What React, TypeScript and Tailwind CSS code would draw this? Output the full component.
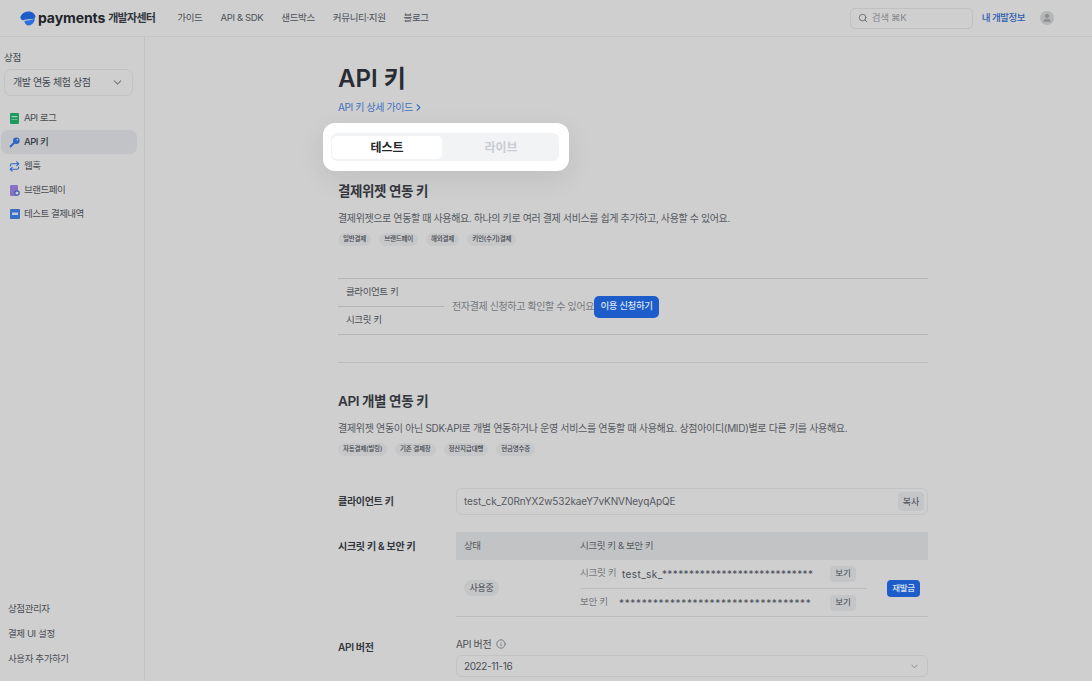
import { ChevronDown, ChevronRight, Info, Repeat, Search, User } from "lucide-react";

const font = "font-['Inter','Noto_Sans_CJK_KR',sans-serif]";

function Chip({ children }: { children: string }) {
  return (
    <span className="flex h-[13px] items-center rounded-full bg-[#c6c7c9] px-[5px] text-[6.500px] font-medium leading-none tracking-[-0.2px] text-[#3f444b]">
      {children}
    </span>
  );
}

function LogoMark() {
  return (
    <svg width="16" height="15" viewBox="0 0 15 14">
      <path d="M7 0.5C10 0 14.500 2 14.500 5.500C13 8.500 9 7 5.500 8C3 8.500 2.500 9 2 8.500C0 7.500 0 5.500 1.200 4C2.500 2 4.500 1 7 0.500Z" fill="#1d5cc9" />
      <path d="M4 9.500C7 8.500 11 9 14 6.500C14 10 11.500 13.500 8 13.500C6 13.500 4.500 11.500 4 9.500Z" fill="#2a6fdc" />
    </svg>
  );
}

function LogIcon() {
  return (
    <svg width="9" height="11" viewBox="0 0 9 11">
      <rect width="9" height="11" rx="1.200" fill="#1f9a5e" />
      <rect x="1.500" y="3" width="6" height="1.200" fill="#9fd6ba" />
      <rect x="1.500" y="6" width="6" height="1" fill="#6cbd95" />
    </svg>
  );
}

function KeyIcon() {
  return (
    <svg width="11" height="11" viewBox="0 0 11 11">
      <circle cx="7.300" cy="3.700" r="3.300" fill="#2f67c4" />
      <path d="M5.500 5.500L1 10" stroke="#2f67c4" strokeWidth="2" />
      <circle cx="8.300" cy="2.700" r="0.800" fill="#cfcfcf" />
    </svg>
  );
}

function BrandIcon() {
  return (
    <svg width="10" height="11" viewBox="0 0 10 11">
      <rect width="8" height="11" rx="1.200" fill="#8a70c4" />
      <circle cx="7" cy="8" r="2.200" fill="#cfcfcf" stroke="#3a5fb0" strokeWidth="1.200" />
    </svg>
  );
}

function ReceiptIcon() {
  return (
    <svg width="10" height="10" viewBox="0 0 10 10">
      <rect width="10" height="10" rx="1" fill="#3a6ec4" />
      <rect x="2" y="3.500" width="6" height="2.500" fill="#bcc8dc" />
    </svg>
  );
}

function NavItem({ icon, label, active }: { icon: React.ReactNode; label: string; active?: boolean }) {
  return (
    <div className={`ml-[1px] flex h-[24px] w-[136px] items-center gap-[4px] rounded-[7px] pl-[8px] text-[9.500px] tracking-[-0.5px] ${active ? "bg-[#c2c3c6] font-medium text-[#33383f]" : "text-[#4a4e55]"}`}>
      <span className="flex w-[11px] justify-center">{icon}</span>
      {label}
    </div>
  );
}

function Header() {
  return (
    <header className="flex h-[37px] shrink-0 items-center border-b border-[#c5c5c5] pl-[20px] pr-[38px]">
      <LogoMark />
      <span className="ml-[2px] text-[14px] font-bold leading-none tracking-[-0.1px] text-[#22262c]">payments</span>
      <span className="ml-[3px] text-[11px] font-semibold tracking-[-0.7px] text-[#33373d]">개발자센터</span>
      <nav className="ml-[22px] flex items-center gap-[18px] text-[9.500px] tracking-[-0.35px] text-[#4b5057]">
        <span>가이드</span>
        <span>API &amp; SDK</span>
        <span>샌드박스</span>
        <span>커뮤니티·지원</span>
        <span>블로그</span>
      </nav>
      <div className="ml-auto flex h-[21px] w-[123px] items-center gap-[4px] rounded-[5px] border border-[#bfc0c2] pl-[7px] text-[9.500px] tracking-[-0.3px] text-[#85888d]">
        <Search size={10} strokeWidth={2} className="text-[#5f6368]" />
        검색 ⌘K
      </div>
      <span className="ml-[9px] text-[9.500px] font-medium tracking-[-0.5px] text-[#2c5cae]">내 개발정보</span>
      <span className="ml-[15px] flex h-[14px] w-[14px] items-center justify-center overflow-hidden rounded-full bg-[#b4b5b7]">
        <User size={10} fill="#8d8e90" stroke="#8d8e90" />
      </span>
    </header>
  );
}

function Sidebar() {
  return (
    <aside className="flex w-[145px] shrink-0 flex-col border-r border-[#c3c3c3] pb-[15px] pt-[14px]">
      <div className="pl-[4px] text-[9.500px] tracking-[-0.3px] text-[#43474e]">상점</div>
      <div className="mx-[4px] mt-[4px] flex h-[27px] w-[129px] items-center justify-between rounded-[7px] border border-[#c1c2c4] pl-[8px] pr-[8px] text-[10px] tracking-[-0.4px] text-[#43474e]">
        개발 연동 체험 상점
        <ChevronDown size={13} className="text-[#74777c]" />
      </div>
      <div className="mt-[10px] flex flex-col">
        <NavItem label="API 로그" icon={<LogIcon />} />
        <NavItem label="API 키" active icon={<KeyIcon />} />
        <NavItem label="웹훅" icon={<Repeat size={11} strokeWidth={2.500} className="text-[#2f67c4]" />} />
        <NavItem label="브랜드페이" icon={<BrandIcon />} />
        <NavItem label="테스트 결제내역" icon={<ReceiptIcon />} />
      </div>
      <div className="mt-auto flex flex-col gap-[10px] pl-[8px] text-[9.500px] leading-[15px] tracking-[-0.4px] text-[#4a4e55]">
        <span>상점관리자</span>
        <span>결제 UI 설정</span>
        <span>사용자 추가하기</span>
      </div>
    </aside>
  );
}

function SecretRow({ label, value, labelWidth, spacing }: { label: string; value: string; labelWidth: string; spacing: string }) {
  return (
    <div className="flex h-[28px] items-center pr-[11px]">
      <span className={`shrink-0 text-[9.500px] tracking-[-0.3px] text-[#75787d] ${labelWidth}`}>{label}</span>
      <span className={`whitespace-nowrap pt-[1px] text-[10px] text-[#4a4e55] ${spacing}`}>{value}</span>
      <span className="ml-auto flex h-[16px] w-[26px] items-center justify-center rounded-[4px] bg-[#c4c5c7] text-[8.500px] text-[#43474e]">보기</span>
    </div>
  );
}

function Main() {
  return (
    <main className="min-w-0 flex-1 pl-[193px] pr-[164px] pt-[28px]">
      <h1 className="text-[24px] font-semibold leading-[28px] text-[#282c33]">API 키</h1>
      <a className="mt-[7px] flex items-center text-[10px] leading-[14px] tracking-[-0.4px] text-[#3e6fc0]">
        API 키 상세 가이드
        <ChevronRight size={11} strokeWidth={2.500} />
      </a>
      <div className="-ml-[15px] mt-[9px] h-[48px] w-[246px] rounded-[12px] bg-white py-[10px] pl-[8px] pr-[10px] shadow-[0_8px_28px_rgba(0,0,0,0.08)]">
        <div className="flex h-[28px] items-center rounded-[6px] bg-[#f2f3f5] px-[1px]">
          <div className="flex h-[23px] w-[110px] items-center justify-center rounded-[5px] bg-white pt-[1px] text-[12px] font-bold text-[#24272c]">테스트</div>
          <div className="flex flex-1 items-center justify-center pl-[2px] pt-[1px] text-[12px] font-semibold text-[#c9ccd1]">라이브</div>
        </div>
      </div>

      <h2 className="mt-[10px] text-[13.500px] font-semibold leading-[20px] tracking-[-0.4px] text-[#33373d]">결제위젯 연동 키</h2>
      <p className="mt-[9px] whitespace-nowrap text-[10px] leading-[16px] tracking-[-0.38px] text-[#55595f]">
        결제위젯으로 연동할 때 사용해요. 하나의 키로 여러 결제 서비스를 쉽게 추가하고, 사용할 수 있어요.
      </p>
      <div className="mt-[7px] flex gap-[8px]">
        <Chip>일반결제</Chip>
        <Chip>브랜드페이</Chip>
        <Chip>해외결제</Chip>
        <Chip>키인(수기)결제</Chip>
      </div>

      <div className="mt-[32px] flex h-[57px] items-center border-y border-[#b4b5b7]">
        <div className="flex w-[106px] flex-col text-[9.500px] tracking-[-0.4px] text-[#4a4e55]">
          <span className="flex h-[28px] items-center border-b border-[#b4b5b7] pl-[8px]">클라이언트 키</span>
          <span className="flex h-[27px] items-center pl-[8px]">시크릿 키</span>
        </div>
        <span className="ml-[8px] text-[10px] tracking-[-0.38px] text-[#75787d]">전자결제 신청하고 확인할 수 있어요</span>
        <span className="flex h-[22px] w-[65px] items-center justify-center rounded-[5px] bg-[#1d5cc9] text-[9.500px] font-medium tracking-[-0.4px] text-[#d9e2f2]">이용 신청하기</span>
      </div>
      <div className="mt-[27px] h-px bg-[#bdbec0]" />

      <h2 className="mt-[28px] text-[13.500px] font-semibold leading-[20px] tracking-[-0.4px] text-[#33373d]">API 개별 연동 키</h2>
      <p className="mt-[9px] whitespace-nowrap text-[10px] leading-[16px] tracking-[-0.32px] text-[#55595f]">
        결제위젯 연동이 아닌 SDK·API로 개별 연동하거나 운영 서비스를 연동할 때 사용해요. 상점아이디(MID)별로 다른 키를 사용해요.
      </p>
      <div className="mt-[7px] flex gap-[8px]">
        <Chip>자동결제(빌링)</Chip>
        <Chip>기존 결제창</Chip>
        <Chip>정산지급대행</Chip>
        <Chip>현금영수증</Chip>
      </div>

      <div className="mt-[32px] flex items-center">
        <span className="w-[118px] text-[10px] font-semibold tracking-[-0.3px] text-[#33373d]">클라이언트 키</span>
        <div className="flex h-[27px] flex-1 items-center justify-between rounded-[6px] border border-[#c2c3c5] pl-[7px] pr-[3px] text-[10px] tracking-[-0.1px] text-[#55595f]">
          test_ck_Z0RnYX2w532kaeY7vKNVNeyqApQE
          <span className="flex h-[19px] w-[26px] items-center justify-center rounded-[4px] bg-[#c4c5c7] text-[9px] text-[#43474e]">복사</span>
        </div>
      </div>

      <div className="mt-[17px] flex">
        <span className="w-[118px] pt-[6px] text-[10px] font-semibold leading-[16px] tracking-[-0.3px] text-[#33373d]">시크릿 키 &amp; 보안 키</span>
        <div className="flex-1">
          <div className="flex h-[28px] items-center bg-[#c2c3c5] text-[9.500px] tracking-[-0.4px] text-[#55595f]">
            <span className="w-[124px] pl-[8px]">상태</span>
            <span>시크릿 키 &amp; 보안 키</span>
          </div>
          <div className="flex h-[57px] items-center border-b border-[#bcbdbf]">
            <div className="w-[124px] pl-[8px]">
              <span className="flex h-[16px] w-[35px] items-center justify-center rounded-full bg-[#c4c5c7] text-[9px] tracking-[-0.3px] text-[#43474e]">사용중</span>
            </div>
            <div className="w-[287px]">
              <div className="border-b border-[#bcbdbf]">
                <SecretRow label="시크릿 키" labelWidth="w-[42px]" spacing="tracking-[0.4px]" value="test_sk_****************************" />
              </div>
              <SecretRow label="보안 키" labelWidth="w-[39px]" spacing="tracking-[0.65px]" value="**********************************" />
            </div>
            <span className="ml-[20px] flex h-[17px] w-[33px] items-center justify-center rounded-[4px] bg-[#1d5cc9] text-[8.500px] font-medium tracking-[-0.3px] text-[#d9e2f2]">재발급</span>
          </div>
        </div>
      </div>

      <div className="mt-[19px] flex">
        <span className="w-[118px] pt-[3px] text-[10px] font-semibold leading-[16px] tracking-[-0.3px] text-[#33373d]">API 버전</span>
        <div className="flex-1">
          <div className="flex h-[16px] items-center gap-[5px] text-[10px] tracking-[-0.3px] text-[#4a4e55]">
            API 버전
            <Info size={10} className="text-[#6a6d72]" />
          </div>
          <div className="mt-[3px] flex h-[22px] items-center justify-between rounded-[6px] border border-[#c2c3c5] pl-[7px] pr-[7px] text-[10px] tracking-[-0.4px] text-[#4a4e55]">
            2022-11-16
            <ChevronDown size={11} className="text-[#85888d]" />
          </div>
        </div>
      </div>
    </main>
  );
}

export default function App() {
  return (
    <div className={`flex h-[681px] w-[1092px] flex-col overflow-hidden bg-[#cfcfcf] ${font}`}>
      <Header />
      <div className="flex min-h-0 flex-1">
        <Sidebar />
        <Main />
      </div>
    </div>
  );
}
